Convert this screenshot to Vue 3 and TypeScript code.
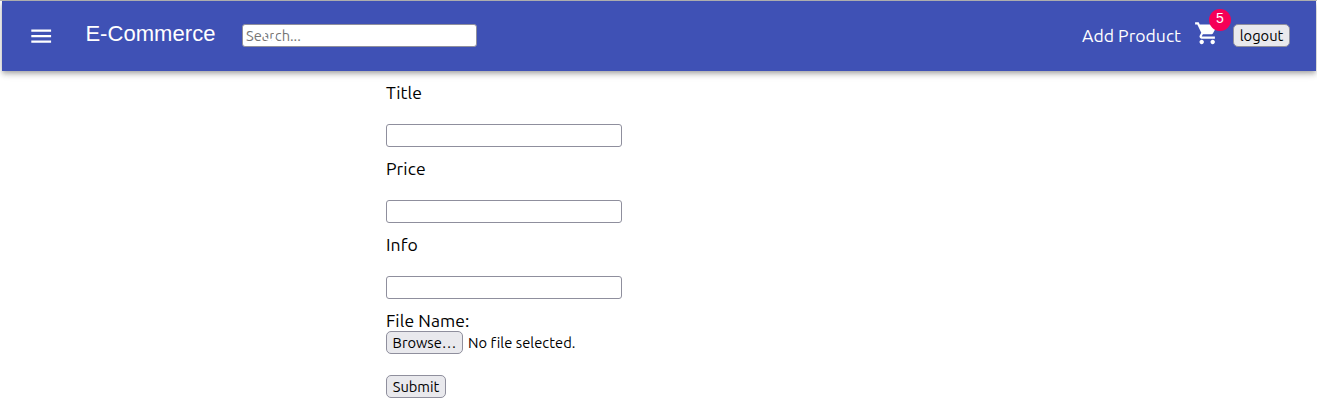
<script setup lang="ts">
import { ref } from 'vue'

interface Field {
  id: string
  label: string
}

const fields: Field[] = [
  { id: 'title', label: 'Title' },
  { id: 'price', label: 'Price' },
  { id: 'info', label: 'Info' },
]
const cartCount = ref(5)
const search = ref('')
</script>

<template>
  <div class="page">
    <header class="bar">
      <button class="menu" aria-label="Menu">
        <svg viewBox="0 0 24 24" width="26.4" height="26.4" fill="currentColor">
          <path d="M3 18h18v-2H3v2zm0-5h18v-2H3v2zm0-7v2h18V6H3z" />
        </svg>
      </button>
      <div class="brand">E-Commerce</div>
      <div class="search">
        <input v-model="search" class="box" placeholder="Search..." />
        <svg class="lens" viewBox="0 0 24 24" width="24" height="24" fill="currentColor">
          <path d="M15.5 14h-.79l-.28-.27C15.41 12.59 16 11.11 16 9.5 16 5.91 13.09 3 9.5 3S3 5.91 3 9.5 5.91 16 9.5 16c1.61 0 3.09-.59 4.23-1.57l.27.28v.79l5 4.99L20.49 19l-4.99-5zm-6 0C7.01 14 5 11.99 5 9.5S7.01 5 9.5 5 14 7.01 14 9.5 11.99 14 9.5 14z" />
        </svg>
      </div>
      <nav class="actions">
        <a class="add">Add Product</a>
        <span class="cart">
          <svg viewBox="0 0 24 24" width="26.4" height="26.4" fill="currentColor">
            <path d="M7 18c-1.1 0-1.99.9-1.99 2S5.9 22 7 22s2-.9 2-2-.9-2-2-2zM1 2v2h2l3.6 7.59-1.35 2.45c-.16.28-.25.61-.25.96 0 1.1.9 2 2 2h12v-2H7.42c-.14 0-.25-.11-.25-.25l.03-.12.9-1.63h7.45c.75 0 1.41-.41 1.75-1.03l3.58-6.49c.08-.14.12-.31.12-.48 0-.55-.45-1-1-1H5.21l-.94-2H1zm16 16c-1.1 0-1.99.9-1.99 2s.89 2 1.99 2 2-.9 2-2-.9-2-2-2z" />
          </svg>
          <span class="badge">{{ cartCount }}</span>
        </span>
        <button class="btn logout">logout</button>
      </nav>
    </header>
    <form class="form" @submit.prevent>
      <div v-for="f in fields" :key="f.id" class="field">
        <label class="label" :for="f.id">{{ f.label }}</label>
        <input :id="f.id" class="box" />
      </div>
      <div class="label file-label">File Name:</div>
      <div class="file">
        <button type="button" class="btn browse">Browse…</button>
        <span class="status">No file selected.</span>
      </div>
      <button class="btn submit">Submit</button>
    </form>
  </div>
</template>

<style>
body {
  background: #fff;
}
</style>

<style scoped>
.page {
  box-sizing: border-box;
  height: 413px;
  padding: 1px 1px 0 2px;
  overflow: hidden;
  font-family: "Ubuntu", "Noto Sans", sans-serif;
  font-size: 17.6px;
  color: #000;
  box-shadow: inset 0 1px #b9b9b9;
}
.bar {
  box-sizing: border-box;
  height: 70px;
  display: flex;
  align-items: center;
  padding: 0 26px;
  background: #3f51b5;
  color: #fff;
  box-shadow: 0 2px 4px -1px rgba(0, 0, 0, 0.2), 0 4px 5px 0 rgba(0, 0, 0, 0.14),
    0 1px 10px 0 rgba(0, 0, 0, 0.12);
}
.menu {
  display: flex;
  padding: 0;
  border: 0;
  background: none;
  color: inherit;
}
.brand {
  width: 156.6px;
  margin: -4px 0 0 31px;
  font: 22px/28px "Liberation Sans", Arial, sans-serif;
  letter-spacing: 0.05px;
}
.search {
  position: relative;
  display: flex;
  margin-top: -1px;
}
.lens {
  position: absolute;
  left: 18px;
  top: 1px;
  pointer-events: none;
}
.box {
  box-sizing: border-box;
  width: 236px;
  height: 23px;
  padding: 0 3px;
  border: 1px solid #8f8f9d;
  border-radius: 3px;
  outline: 0;
  background: #fff;
  font: 14.67px/20px "Ubuntu", "Noto Sans", sans-serif;
}
.search .box {
  width: 235px;
}
.box::placeholder {
  color: #757575;
  opacity: 1;
}
.actions {
  display: flex;
  align-items: center;
  margin-left: auto;
}
.add {
  margin-top: -2px;
}
.cart {
  position: relative;
  display: flex;
  margin: -5px 12.6px 0 13px;
}
.badge {
  position: absolute;
  top: -11px;
  left: 15px;
  width: 22px;
  height: 22px;
  border-radius: 50%;
  background: #f50057;
  font: 14px/19px "Liberation Sans", Arial, sans-serif;
  text-align: center;
}
.btn {
  box-sizing: border-box;
  height: 23px;
  padding: 0;
  border: 1px solid #8f8f9d;
  border-radius: 5px;
  background: #e9e9ed;
  color: #000;
  font: 14.67px/20px "Ubuntu", "Noto Sans", sans-serif;
  white-space: nowrap;
}
.logout {
  width: 57px;
  margin-top: -1px;
}
.form {
  margin-left: 384px;
  padding-top: 12px;
}
.field {
  height: 76px;
}
.label {
  display: block;
  height: 41px;
  letter-spacing: 0.08px;
  line-height: 20px;
}
.field .box {
  display: block;
}
.file-label {
  height: 20px;
}
.file {
  display: flex;
  align-items: center;
  gap: 5px;
  margin-bottom: 21px;
}
.browse {
  width: 77px;
}
.submit {
  display: block;
  width: 60px;
}
.status {
  font-size: 14.67px;
  line-height: 20px;
  letter-spacing: 0.05px;
}
</style>
